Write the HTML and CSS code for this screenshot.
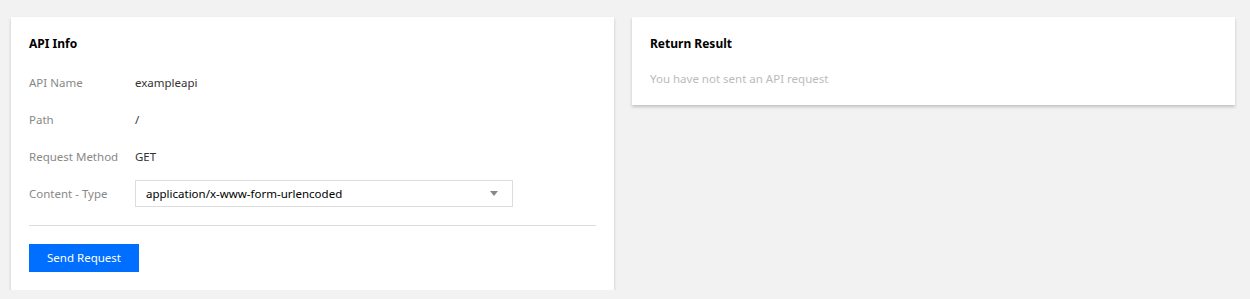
FILE: index.html
```html
<!DOCTYPE html>
<html lang="en">
<head>
  <meta charset="utf-8">
  <title>API Explorer</title>
  <link rel="stylesheet" href="styles.css">
</head>
<body>
  <main class="layout">
    <section class="card">
      <h2 class="card-title">API Info</h2>
      <dl class="fields">
        <div class="field">
          <dt>API Name</dt>
          <dd>exampleapi</dd>
        </div>
        <div class="field">
          <dt>Path</dt>
          <dd>/</dd>
        </div>
        <div class="field">
          <dt>Request Method</dt>
          <dd>GET</dd>
        </div>
        <div class="field">
          <dt>Content - Type</dt>
          <dd>
            <div class="select">
              <span>application/x-www-form-urlencoded</span>
              <i class="caret"></i>
            </div>
          </dd>
        </div>
      </dl>
      <div class="actions">
        <button type="button">Send Request</button>
      </div>
    </section>

    <section class="card result">
      <h2 class="card-title">Return Result</h2>
      <p class="empty">You have not sent an API request</p>
    </section>
  </main>
</body>
</html>
```

FILE: styles.css
```css
* {
  margin: 0;
  padding: 0;
  box-sizing: border-box;
}

:root {
  --bg: #f2f2f2;
  --text: #000;
  --value: #333;
  --label: #888;
  --muted: #bbb;
  --line: #ddd;
  --blue: #006eff;
}

html {
  font-family: "Segoe UI", "Noto Sans", sans-serif;
  font-size: 11.5px;
  line-height: 18px;
}

body {
  background: var(--bg);
  color: var(--text);
}

.layout {
  display: flex;
  align-items: flex-start;
  gap: 18px;
  padding: 17px 15px 0 11px;
}

.card {
  flex: 1;
  background: #fff;
  padding: 18px;
  box-shadow: 0 2px 3px rgba(0, 0, 0, 0.2);
}
.card.result {
  padding-bottom: 17px;
}

.card-title {
  font-size: 12px;
  font-weight: 700;
  line-height: 18px;
}

.fields {
  display: flex;
  flex-direction: column;
  gap: 10px;
  margin-top: 16px;
}
.field {
  display: flex;
  align-items: center;
  height: 27px;
}
.field dt {
  width: 106px;
  color: var(--label);
}
.field dd {
  color: var(--value);
}

.select {
  display: flex;
  align-items: center;
  justify-content: space-between;
  width: 378px;
  height: 27px;
  padding: 0 10px;
  border: 1px solid var(--line);
  color: var(--text);
}
.caret {
  width: 0;
  height: 0;
  border-left: 4px solid transparent;
  border-right: 4px solid transparent;
  border-top: 5px solid #888;
  margin-right: 4px;
}

.actions {
  margin-top: 18px;
  padding-top: 18px;
  border-top: 1px solid var(--line);
}
.actions button {
  width: 110px;
  height: 28px;
  border: 0;
  background: var(--blue);
  color: #fff;
  font: inherit;
  cursor: pointer;
}

.empty {
  margin-top: 17px;
  color: var(--muted);
}
```
